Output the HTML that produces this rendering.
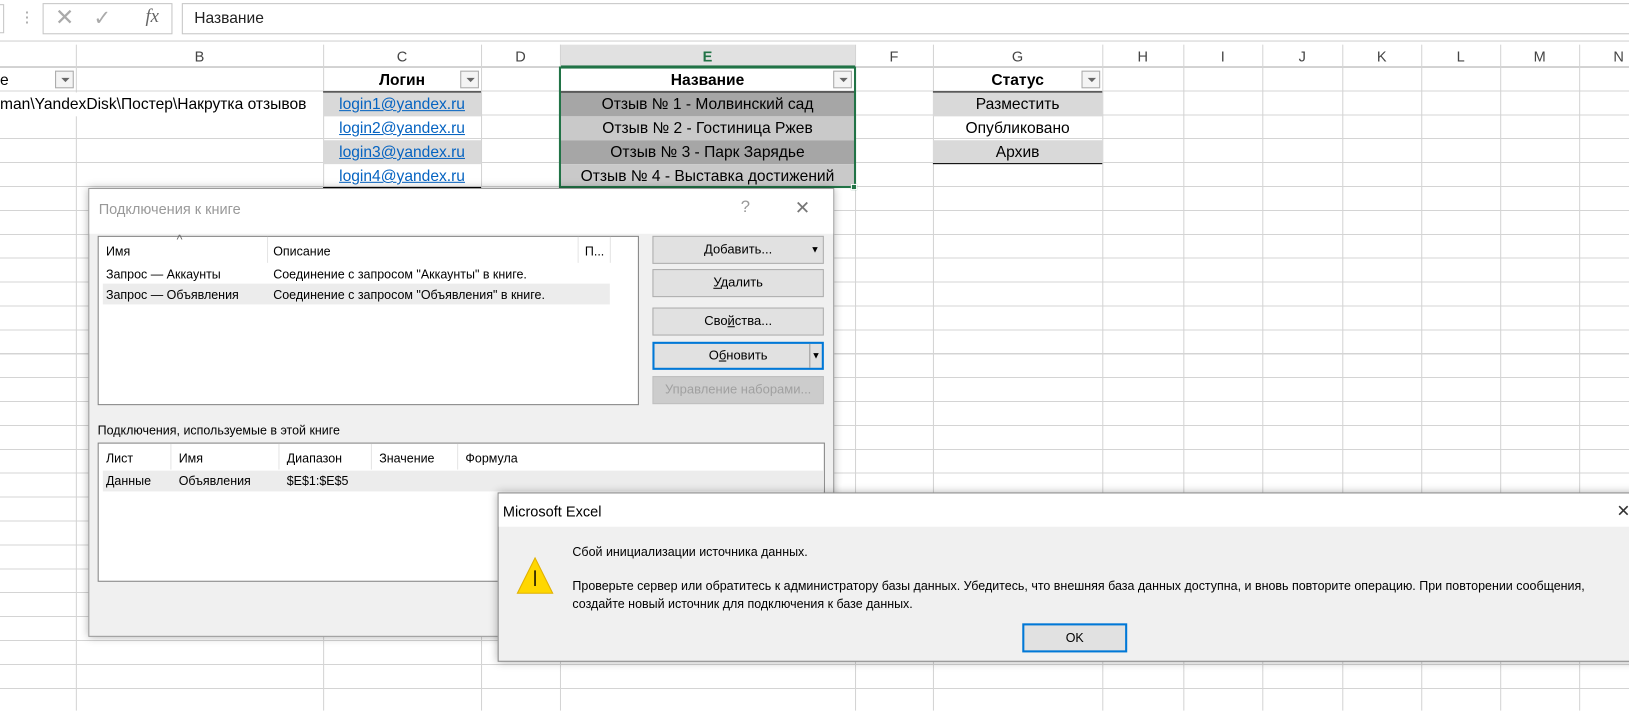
<!DOCTYPE html>
<html><head><meta charset="utf-8"><style>
*{box-sizing:border-box;margin:0;padding:0}
html,body{width:1629px;height:684px;overflow:hidden;background:#fff}
#w{position:absolute;left:0;top:0;width:1568px;height:684px;transform:scale(1.0389);transform-origin:0 0;font-family:"Liberation Sans",sans-serif}
.a{position:absolute}
.grid{position:absolute;left:0;top:65px;width:1568px;height:619px;background-image:repeating-linear-gradient(to bottom,transparent 0,transparent 22px,#d4d4d4 22px,#d4d4d4 23px)}
.vl{position:absolute;top:43px;bottom:0;width:1px;background:#d4d4d4}
.ch{position:absolute;top:43px;height:22px;font-size:14px;color:#444;text-align:center;line-height:22px}
.c{position:absolute;height:23px;line-height:23px;font-size:15px;text-align:center;white-space:nowrap;overflow:hidden}
.dd{position:absolute;width:18px;height:17px;border:1px solid #a9a9a9;background:#f4f4f4}
.dd:after{content:"";position:absolute;left:5px;top:6px;border-left:4px solid transparent;border-right:4px solid transparent;border-top:4px solid #666}
.lnk{color:#0563c1;text-decoration:underline}
.d{font-family:"Liberation Sans",sans-serif;font-size:12px;color:#000}
.btn{position:absolute;left:628px;width:165px;height:27px;background:#e1e1e1;border:1px solid #adadad;font-size:12.5px;text-align:center;line-height:25px;font-family:"Liberation Sans",sans-serif}
</style></head><body><div id="w">
<div class="a" style="left:0;top:0;width:1568px;height:40px;background:#fff;border-bottom:1px solid #d0d0d0"></div>
<div class="a" style="left:-2px;top:4px;width:6px;height:28px;border:1px solid #c6c6c6"></div>
<div class="a" style="left:19px;top:8px;color:#999;font-size:14px">⋮</div>
<div class="a" style="left:41px;top:3px;width:125px;height:30px;border:1px solid #c6c6c6"></div>
<div class="a" style="left:53px;top:4px;color:#aaa;font-size:22px">✕</div>
<div class="a" style="left:90px;top:5px;color:#aaa;font-size:20px">✓</div>
<div class="a" style="left:140px;top:5px;color:#666;font-size:18px;font-style:italic;font-family:'Liberation Serif',serif">fx</div>
<div class="a" style="left:175px;top:3px;width:1460px;height:30px;border:1px solid #c6c6c6;font-size:15px;line-height:28px;padding-left:11px;color:#222">Название</div>
<div class="a" style="left:0;top:43px;width:1568px;height:22px;background:#fff;border-bottom:1px solid #ababab"></div>
<div class="a" style="left:539px;top:43px;width:284px;height:22px;background:#e1e1e1;border-bottom:2px solid #217346"></div>
<div class="grid"></div>
<div class="vl" style="left:73px"></div><div class="vl" style="left:311px"></div><div class="vl" style="left:463px"></div><div class="vl" style="left:539px"></div><div class="vl" style="left:823px"></div><div class="vl" style="left:898px"></div><div class="vl" style="left:1061px"></div><div class="vl" style="left:1139px"></div><div class="vl" style="left:1215px"></div><div class="vl" style="left:1292px"></div><div class="vl" style="left:1368px"></div><div class="vl" style="left:1444px"></div><div class="vl" style="left:1520px"></div>
<div class="ch" style="left:73px;width:238px">B</div><div class="ch" style="left:311px;width:152px">C</div><div class="ch" style="left:463px;width:76px">D</div><div class="ch" style="left:539px;width:284px;color:#217346;font-weight:bold">E</div><div class="ch" style="left:823px;width:75px">F</div><div class="ch" style="left:898px;width:163px">G</div><div class="ch" style="left:1061px;width:78px">H</div><div class="ch" style="left:1139px;width:76px">I</div><div class="ch" style="left:1215px;width:77px">J</div><div class="ch" style="left:1292px;width:76px">K</div><div class="ch" style="left:1368px;width:76px">L</div><div class="ch" style="left:1444px;width:76px">M</div><div class="ch" style="left:1520px;width:76px">N</div>
<div class="c" style="left:0;top:66px;width:20px;text-align:left">е</div>
<div class="dd" style="left:53px;top:68px"></div>
<div class="c" style="left:0;top:89px;width:311px;text-align:left;background:#fff">man\YandexDisk\Постер\Накрутка отзывов</div>
<div class="c" style="left:311px;top:66px;width:152px;font-weight:bold;border-bottom:1px solid #000">Логин</div>
<div class="dd" style="left:443px;top:68px"></div>
<div class="c lnk" style="left:311px;top:89px;width:152px;background:#d9d9d9">login1@yandex.ru</div>
<div class="c lnk" style="left:311px;top:112px;width:152px">login2@yandex.ru</div>
<div class="c lnk" style="left:311px;top:135px;width:152px;background:#d9d9d9">login3@yandex.ru</div>
<div class="c lnk" style="left:311px;top:158px;width:152px;border-bottom:1px solid #000">login4@yandex.ru</div>
<div class="c" style="left:539px;top:66px;width:284px;font-weight:bold;border-bottom:1px solid #000">Название</div>
<div class="dd" style="left:802px;top:68px"></div>
<div class="c" style="left:539px;top:89px;width:284px;background:#a6a6a6">Отзыв № 1 - Молвинский сад</div>
<div class="c" style="left:539px;top:112px;width:284px;background:#c9c9c9">Отзыв № 2 - Гостиница Ржев</div>
<div class="c" style="left:539px;top:135px;width:284px;background:#a6a6a6">Отзыв № 3 - Парк Зарядье</div>
<div class="c" style="left:539px;top:158px;width:284px;background:#c9c9c9">Отзыв № 4 - Выставка достижений</div>
<div class="a" style="left:538px;top:64px;width:286px;height:117px;border:2px solid #217346"></div>
<div class="a" style="left:819px;top:177px;width:6px;height:6px;background:#217346;border:1px solid #fff"></div>
<div class="c" style="left:898px;top:66px;width:163px;font-weight:bold;border-bottom:1px solid #000">Статус</div>
<div class="dd" style="left:1041px;top:68px"></div>
<div class="c" style="left:898px;top:89px;width:163px;background:#d9d9d9">Разместить</div>
<div class="c" style="left:898px;top:112px;width:163px">Опубликовано</div>
<div class="c" style="left:898px;top:135px;width:163px;background:#d9d9d9;border-bottom:1px solid #000">Архив</div>
<div class="a d" style="left:85px;top:181px;width:718px;height:432px;background:#f0f0f0;border:1px solid #999;box-shadow:0 0 8px rgba(0,0,0,.3)">
 <div class="a" style="left:0;top:0;width:716px;height:43px;background:#fff"></div>
 <div class="a" style="left:9px;top:11px;font-size:14px;color:#999">Подключения к книге</div>
 <div class="a" style="left:627px;top:9px;font-size:16px;color:#999">?</div>
 <div class="a" style="left:679px;top:8px;font-size:18px;color:#777">✕</div>
 <div class="a" style="left:8px;top:45px;width:521px;height:163px;background:#fff;border:1px solid #828282">
  <div class="a" style="left:7px;top:7px">Имя</div><div class="a" style="left:75px;top:-4px;color:#666">^</div>
  <div class="a" style="left:162px;top:0;width:1px;height:25px;background:#e5e5e5"></div>
  <div class="a" style="left:168px;top:7px">Описание</div>
  <div class="a" style="left:461px;top:0;width:1px;height:25px;background:#e5e5e5"></div>
  <div class="a" style="left:468px;top:7px">П...</div>
  <div class="a" style="left:492px;top:0;width:1px;height:25px;background:#e5e5e5"></div>
  <div class="a" style="left:7px;top:29px">Запрос — Аккаунты</div><div class="a" style="left:168px;top:29px">Соединение с запросом "Аккаунты" в книге.</div>
  <div class="a" style="left:4px;top:45px;width:488px;height:20px;background:#ececec"></div>
  <div class="a" style="left:7px;top:49px">Запрос — Объявления</div><div class="a" style="left:168px;top:49px">Соединение с запросом "Объявления" в книге.</div>
 </div>
 <div class="a" style="left:8px;top:225px">Подключения, используемые в этой книге</div>
 <div class="a" style="left:8px;top:244px;width:700px;height:134px;background:#fff;border:1px solid #828282">
  <div class="a" style="left:7px;top:7px">Лист</div><div class="a" style="left:77px;top:7px">Имя</div><div class="a" style="left:181px;top:7px">Диапазон</div><div class="a" style="left:270px;top:7px">Значение</div><div class="a" style="left:353px;top:7px">Формула</div>
  <div class="a" style="left:69px;top:0;width:1px;height:25px;background:#e5e5e5"></div><div class="a" style="left:173px;top:0;width:1px;height:25px;background:#e5e5e5"></div><div class="a" style="left:262px;top:0;width:1px;height:25px;background:#e5e5e5"></div><div class="a" style="left:345px;top:0;width:1px;height:25px;background:#e5e5e5"></div>
  <div class="a" style="left:4px;top:26px;width:694px;height:20px;background:#ececec"></div>
  <div class="a" style="left:7px;top:29px">Данные</div><div class="a" style="left:77px;top:29px">Объявления</div><div class="a" style="left:181px;top:29px">$E$1:$E$5</div>
 </div>
</div>
<div class="btn" style="top:227px"><u>Д</u>обавить...<span style="position:absolute;right:3px;top:0;font-size:9px">▼</span></div>
<div class="btn" style="top:259px"><u>У</u>далить</div>
<div class="btn" style="top:296px">Сво<u>й</u>ства...</div>
<div class="btn" style="top:329px;border:2px solid #0078d7;line-height:23px">О<u>б</u>новить<span style="position:absolute;right:0;top:0;width:12px;border-left:1px solid #999;font-size:9px">▼</span></div>
<div class="btn" style="top:362px;background:#ccc;border-color:#bfbfbf;color:#a0a0a0">Управление наборами...</div>
<div class="a d" style="left:479px;top:474px;width:1100px;height:163px;background:#f0f0f0;border:1px solid #888;box-shadow:0 0 8px rgba(0,0,0,.3)">
 <div class="a" style="left:0;top:0;width:1100px;height:32px;background:#fff"></div>
 <div class="a" style="left:4px;top:9px;font-size:14px">Microsoft Excel</div>
 <div class="a" style="left:1076px;top:7px;font-size:16px;color:#333">✕</div>
 <svg class="a" style="left:16px;top:60px" width="38" height="38" viewBox="0 0 38 38"><polygon points="19,2 36,36 2,36" fill="#ffd700" stroke="#e0b000"/><line x1="19" y1="14" x2="19" y2="29" stroke="#000" stroke-width="1.4"/></svg>
 <div class="a" style="left:71px;top:49px">Сбой инициализации источника данных.</div>
 <div class="a" style="left:71px;top:82px;white-space:nowrap">Проверьте сервер или обратитесь к администратору базы данных. Убедитесь, что внешняя база данных доступна, и вновь повторите операцию. При повторении сообщения,</div>
 <div class="a" style="left:71px;top:99px">создайте новый источник для подключения к базе данных.</div>
 <div class="a" style="left:504px;top:125px;width:101px;height:28px;background:#e1e1e1;border:2px solid #0078d7;text-align:center;line-height:24px">OK</div>
</div>
</div></body></html>
